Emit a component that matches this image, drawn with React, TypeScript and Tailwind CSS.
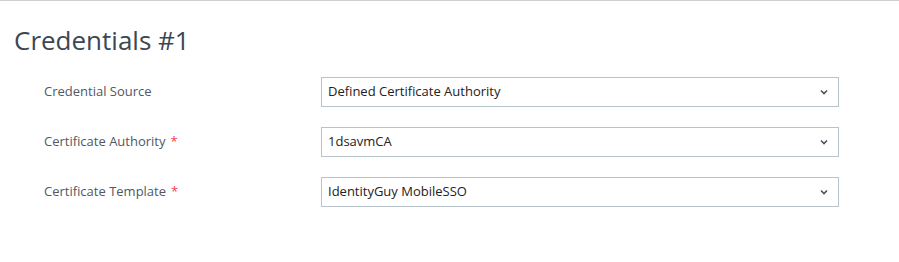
import { useState } from "react";

const rows = [
  { label: "Credential Source", value: "Defined Certificate Authority", required: false },
  { label: "Certificate Authority", value: "1dsavmCA", required: true },
  { label: "Certificate Template", value: "IdentityGuy MobileSSO", required: true },
];

function Chevron() {
  return (
    <svg width="8" height="6" viewBox="0 0 8 6" className="text-[#4a5360]">
      <path d="M1 1.5 L4 4.5 L7 1.5" fill="none" stroke="currentColor" strokeWidth="1.6" />
    </svg>
  );
}

export default function App() {
  const [values] = useState(rows.map((r) => r.value));

  return (
    <div className="w-[899px] h-[262px] bg-white border-t border-[#d0d0d0] font-['Open_Sans',sans-serif]">
      <h1 className="pl-[14px] pt-[22px] text-[26px] leading-[34px] text-[#3b4754]">
        Credentials #1
      </h1>
      <div className="mt-[20px] flex flex-col gap-[20px]">
        {rows.map((row, i) => (
          <div key={row.label} className="flex items-center h-[30px]">
            <div className="w-[321px] pl-[44px] text-[13px] text-[#4f5963]">
              {row.label}
              {row.required && <span className="ml-[5px] text-[#ef3b54]">*</span>}
            </div>
            <div className="w-[518px] h-[30px] border border-[#b8c4cc] flex items-center justify-between pl-[6px] pr-[10px]">
              <span className="text-[13px] text-[#222]">{values[i]}</span>
              <Chevron />
            </div>
          </div>
        ))}
      </div>
    </div>
  );
}
